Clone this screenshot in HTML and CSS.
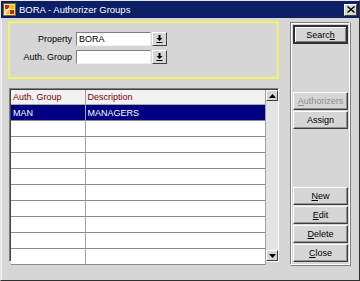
FILE: index.html
```html
<!DOCTYPE html>
<html>
<head>
    <title>BORA - Authorizer Groups</title>
    <link rel="stylesheet" href="styles.css">
</head>
<body>
    <div class="window">
        <div class="titlebar">
            <svg class="app-icon" width="13" height="13" viewBox="0 0 13 13">
                <rect x="0.5" y="0.5" width="12" height="12" fill="#f0e0a0" stroke="#806020"/>
                <rect x="2" y="2" width="4" height="4" fill="#d02020"/>
                <rect x="7" y="2" width="4" height="4" fill="#f0c000"/>
                <rect x="2" y="7" width="4" height="4" fill="#f0c000"/>
                <rect x="7" y="7" width="4" height="4" fill="#d02020"/>
                <path d="M1 12 L6 5" stroke="#ffffff" stroke-width="1.2"/>
            </svg>
            <span class="title">BORA - Authorizer Groups</span>
            <span class="close-box">
                <svg width="8" height="7" viewBox="0 0 8 7"><path d="M0.5 0.5 L7.5 6.5 M7.5 0.5 L0.5 6.5" stroke="#000" stroke-width="1.4"/></svg>
            </span>
        </div>
        <div class="content">
            <div class="main">
                <div class="criteria">
                    <div class="field">
                        <span class="label">Property</span>
                        <span class="combo"><span class="value">BORA</span></span>
                        <span class="drop"><svg width="7" height="8" viewBox="0 0 7 8"><path d="M2.5 0 H4.5 V3 H6.5 L3.5 6 L0.5 3 H2.5 Z" fill="#000"/><rect x="0.5" y="7" width="6" height="1" fill="#000"/></svg></span>
                    </div>
                    <div class="field">
                        <span class="label">Auth. Group</span>
                        <span class="combo"><span class="value"></span></span>
                        <span class="drop"><svg width="7" height="8" viewBox="0 0 7 8"><path d="M2.5 0 H4.5 V3 H6.5 L3.5 6 L0.5 3 H2.5 Z" fill="#000"/><rect x="0.5" y="7" width="6" height="1" fill="#000"/></svg></span>
                    </div>
                </div>

                <div class="grid">
                    <table class="grid-table">
                        <thead>
                            <tr><th class="col-code">Auth. Group</th><th>Description</th></tr>
                        </thead>
                        <tbody>
                            <tr class="selected"><td>MAN</td><td>MANAGERS</td></tr>
                            <tr><td></td><td></td></tr>
                            <tr><td></td><td></td></tr>
                            <tr><td></td><td></td></tr>
                            <tr><td></td><td></td></tr>
                            <tr><td></td><td></td></tr>
                            <tr><td></td><td></td></tr>
                            <tr><td></td><td></td></tr>
                            <tr><td></td><td></td></tr>
                            <tr><td></td><td></td></tr>
                        </tbody>
                    </table>
                    <div class="scrollbar">
                        <span class="arrow"><svg width="7" height="4" viewBox="0 0 7 4"><path d="M3.5 0 L7 4 H0 Z" fill="#000"/></svg></span>
                        <span class="track"></span>
                        <span class="arrow"><svg width="7" height="4" viewBox="0 0 7 4"><path d="M0 0 H7 L3.5 4 Z" fill="#000"/></svg></span>
                    </div>
                </div>
            </div>

            <div class="side">
                <div class="btn default">Searc<u>h</u></div>
                <div class="btn-group top-group">
                    <div class="btn disabled"><u>A</u>uthorizers</div>
                    <div class="btn">Assign</div>
                </div>
                <div class="btn-group bottom-group">
                    <div class="btn"><u>N</u>ew</div>
                    <div class="btn"><u>E</u>dit</div>
                    <div class="btn"><u>D</u>elete</div>
                    <div class="btn"><u>C</u>lose</div>
                </div>
            </div>
        </div>
    </div>
</body>
</html>
```

FILE: styles.css
```css
* {
    box-sizing: border-box;
}

html, body {
    margin: 0;
    width: 360px;
    height: 281px;
    overflow: hidden;
    font-family: "Liberation Sans", Arial, sans-serif;
    font-size: 9px;
    color: #000;
}

.window {
    width: 360px;
    height: 281px;
    display: flex;
    flex-direction: column;
    background-color: #d6d6d6;
    border: 1px solid;
    border-color: #e6e6e6 #303030 #303030 #e6e6e6;
}

/* Title bar */
.titlebar {
    height: 17px;
    display: flex;
    align-items: center;
    background-color: #0c1f66;
    color: #ffffff;
    padding: 0 2px 0 2px;
}

.app-icon {
    margin-right: 3px;
}

.title {
    flex: 1;
    font-size: 9.5px;
}

.close-box {
    width: 13px;
    height: 12px;
    display: flex;
    align-items: center;
    justify-content: center;
    background-color: #d6d6d6;
    border: 1px solid;
    border-color: #ffffff #404040 #404040 #ffffff;
}

/* Body */
.content {
    flex: 1;
    display: flex;
    padding: 3px 0 0 6px;
    border-left: 1px solid #f4f4f4;
}

.main {
    width: 271px;
    display: flex;
    flex-direction: column;
}

.criteria {
    height: 58px;
    border: 2px solid #f2f26a;
    box-shadow: inset 0 0 1px #f8f8a0;
    padding: 9px 0 0 0;
    display: flex;
    flex-direction: column;
    gap: 4px;
}

.field {
    display: flex;
    align-items: center;
    height: 14px;
}

.label {
    width: 62px;
    text-align: right;
    margin-right: 4px;
}

.combo {
    width: 75px;
    height: 14px;
    background-color: #ffffff;
    border: 1px solid;
    border-color: #808080 #f0f0f0 #f0f0f0 #808080;
    padding: 0 0 0 2px;
    line-height: 12px;
}

.drop {
    width: 15px;
    height: 14px;
    margin-left: 1px;
    display: flex;
    align-items: center;
    justify-content: center;
    border: 1px solid;
    border-color: #ffffff #404040 #404040 #ffffff;
}

/* Grid */
.grid {
    margin-top: 9px;
    margin-left: 1px;
    width: 270px;
    height: 174px;
    display: flex;
    border: 1px solid;
    border-color: #808080 #ffffff #ffffff #808080;
    box-shadow: inset 1px 1px 0 #404040;
}

.grid-table {
    flex: 1;
    border-collapse: collapse;
    background-color: #ffffff;
    align-self: flex-start;
    margin: 1px 0 0 1px;
}

.grid-table th,
.grid-table td {
    height: 16px;
    padding: 0 2px;
    text-align: left;
    font-weight: normal;
    border-right: 1px solid #a0a0a0;
    border-bottom: 1px solid #8c8c8c;
    line-height: 14px;
}

.grid-table th {
    height: 14px;
    color: #800000;
    background-color: #f2f2f2;
    border-bottom: 1px solid #a8a8a8;
}

.grid-table .col-code {
    width: 74px;
}

.grid-table tr.selected td {
    background-color: #000080;
    color: #ffffff;
    border-right-color: #a0a0a0;
}

.scrollbar {
    width: 12px;
    display: flex;
    flex-direction: column;
    background-color: #e4e4e4;
    margin-top: 1px;
}

.scrollbar .arrow {
    height: 11px;
    display: flex;
    align-items: center;
    justify-content: center;
    background-color: #d6d6d6;
    border: 1px solid;
    border-color: #ffffff #404040 #404040 #ffffff;
}

.scrollbar .track {
    flex: 1;
}

/* Side buttons */
.side {
    margin: 1px 0 0 11px;
    width: 60px;
    height: 243px;
    display: flex;
    flex-direction: column;
    padding: 2px 1px 2px 2px;
    border: 1px solid;
    border-color: #808080 #ffffff #ffffff #808080;
    box-shadow: 1px 1px 0 #808080, inset 1px 1px 0 #ffffff;
}

.btn {
    height: 18px;
    display: flex;
    align-items: center;
    justify-content: center;
    background-color: #d6d6d6;
    border: 1px solid;
    border-color: #ffffff #404040 #404040 #ffffff;
    box-shadow: inset -1px -1px 0 #909090;
    font-size: 9px;
}

.btn.default {
    height: 19px;
    border: 2px solid;
    border-color: #303030;
    box-shadow: inset 1px 1px 0 #ffffff, inset -1px -1px 0 #808080;
}

.btn.disabled {
    color: #8c8c8c;
}

.btn-group {
    display: flex;
    flex-direction: column;
    gap: 1px;
}

.top-group {
    margin-top: 48px;
}

.bottom-group {
    margin-top: auto;
}
```
